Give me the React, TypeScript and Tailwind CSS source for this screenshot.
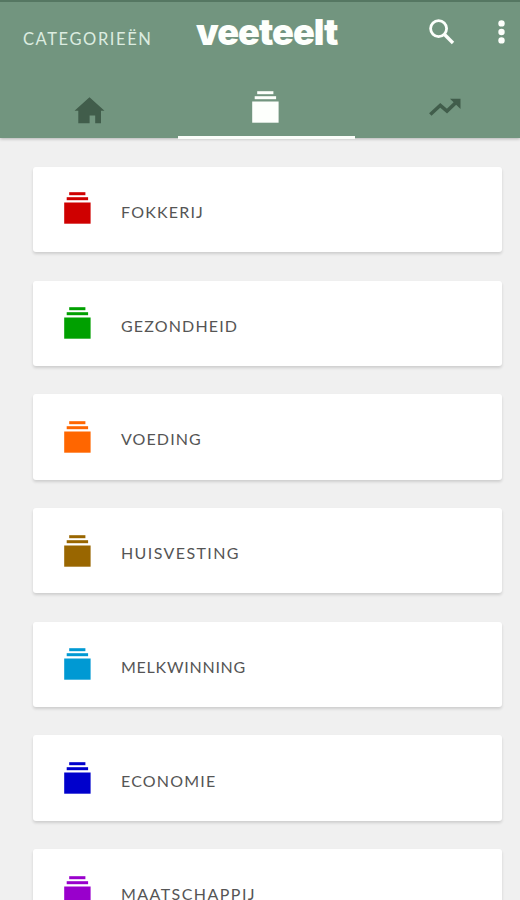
import React from 'react';

interface Category {
  name: string;
  color: string;
  labelClass: string;
  iconClass: string;
}

const categories: Category[] = [
  { name: 'FOKKERIJ', color: '#cf0000', labelClass: 'tracking-[1.2px]', iconClass: 'mb-[3px]' },
  { name: 'GEZONDHEID', color: '#00a000', labelClass: 'tracking-[1.15px]', iconClass: '' },
  { name: 'VOEDING', color: '#ff6600', labelClass: 'tracking-[1.1px]', iconClass: '' },
  { name: 'HUISVESTING', color: '#996600', labelClass: 'tracking-[1.4px]', iconClass: '' },
  { name: 'MELKWINNING', color: '#0099d3', labelClass: 'tracking-[0.75px]', iconClass: '' },
  { name: 'ECONOMIE', color: '#0000cc', labelClass: 'tracking-[1.2px]', iconClass: '' },
  { name: 'MAATSCHAPPIJ', color: '#9900cc', labelClass: 'tracking-[1.45px]', iconClass: '' },
];

const StackIcon: React.FC<{ color: string; className?: string }> = ({ color, className }) => (
  <svg viewBox="0 0 27 32" fill={color} className={`w-[27px] h-8 shrink-0 ${className ?? ''}`}>
    <rect x="5.2" y="0.2" width="16.2" height="3" />
    <rect x="2.7" y="5.2" width="21.4" height="3" />
    <rect x="0.2" y="10.5" width="26.4" height="21.2" />
  </svg>
);

const Header: React.FC = () => (
  <header className="relative h-[138px] shrink-0 flex flex-col bg-[#72957f] border-t-2 border-[#557762] shadow-[0_1px_3px_rgba(0,0,0,0.25)]">
    {/* Title bar */}
    <div className="h-[60px] shrink-0 flex items-center">
      <span className="w-[174px] pl-[23px] pt-[14px] text-[16.5px] leading-5 tracking-[1.6px] text-[#dcece0] whitespace-nowrap">
        CATEGORIEËN
      </span>
      <h1 className="w-[255px] pl-[22px] font-['Inter'] text-[36px] leading-[34px] font-black tracking-[-0.95px] text-[#fdfffc]">
        veeteelt
      </h1>
      <button aria-label="Zoeken">
        <svg viewBox="0 0 26 26" fill="none" stroke="#fdfffc" className="w-[26px] h-[26px]">
          <circle cx="9.6" cy="9.6" r="8" strokeWidth="2.8" />
          <path d="M15.3 15.3L24 24" strokeWidth="3.4" />
        </svg>
      </button>
      <button aria-label="Menu" className="ml-[42px]">
        <svg viewBox="0 0 8 26" fill="#fdfffc" className="w-2 h-[26px]">
          <circle cx="4.5" cy="4.4" r="3.2" />
          <circle cx="4.5" cy="13" r="3.2" />
          <circle cx="4.5" cy="21.4" r="3.2" />
        </svg>
      </button>
    </div>

    {/* Tabs */}
    <nav className="flex h-[77px] shrink-0">
      <div className="w-[178px] pt-[35px] pl-[74px]">
        <svg viewBox="0 0 31 27" fill="#415d4b" className="w-[31px] h-[27px]">
          <path d="M15.5 0.3L30.5 13.7H27V26.2H21.2V18.4H15.6V26.2H4.3V13.7H0.5Z" />
        </svg>
      </div>
      <div className="w-[177px] pt-[30px] pr-[2px] flex justify-center border-b-[3.5px] border-[#fafcf9]">
        <StackIcon color="#fdfffc" className="-mt-px" />
      </div>
      <div className="pt-[36px] pl-[74px]">
        <svg viewBox="0 0 32 18" fill="none" stroke="#415d4b" className="w-8 h-[18px]">
          <path d="M1.3 16.5L11.3 7.3L18 13L28 3.5" strokeWidth="3.6" />
          <path d="M21 0.8H31.5V11Z" fill="#415d4b" stroke="none" />
        </svg>
      </div>
    </nav>
  </header>
);

const CategoryCard: React.FC<{ category: Category }> = ({ category }) => (
  <li className="h-[85.2px] shrink-0 flex items-center rounded-[3px] bg-white pl-[31px] shadow-[0_2px_3px_rgba(0,0,0,0.14)]">
    <StackIcon color={category.color} className={category.iconClass} />
    <span className={`ml-[30px] mt-[5px] text-[16px] leading-5 text-[#555555] ${category.labelClass}`}>
      {category.name}
    </span>
  </li>
);

export default function App() {
  return (
    <div className="w-[520px] h-[900px] overflow-hidden flex flex-col bg-[#f0f0f0] font-['Lato',sans-serif]">
      <Header />
      <ul className="flex flex-col gap-[28.5px] pt-[29px] pl-[33px] pr-[18px]">
        {categories.map((category) => (
          <CategoryCard key={category.name} category={category} />
        ))}
      </ul>
    </div>
  );
}
